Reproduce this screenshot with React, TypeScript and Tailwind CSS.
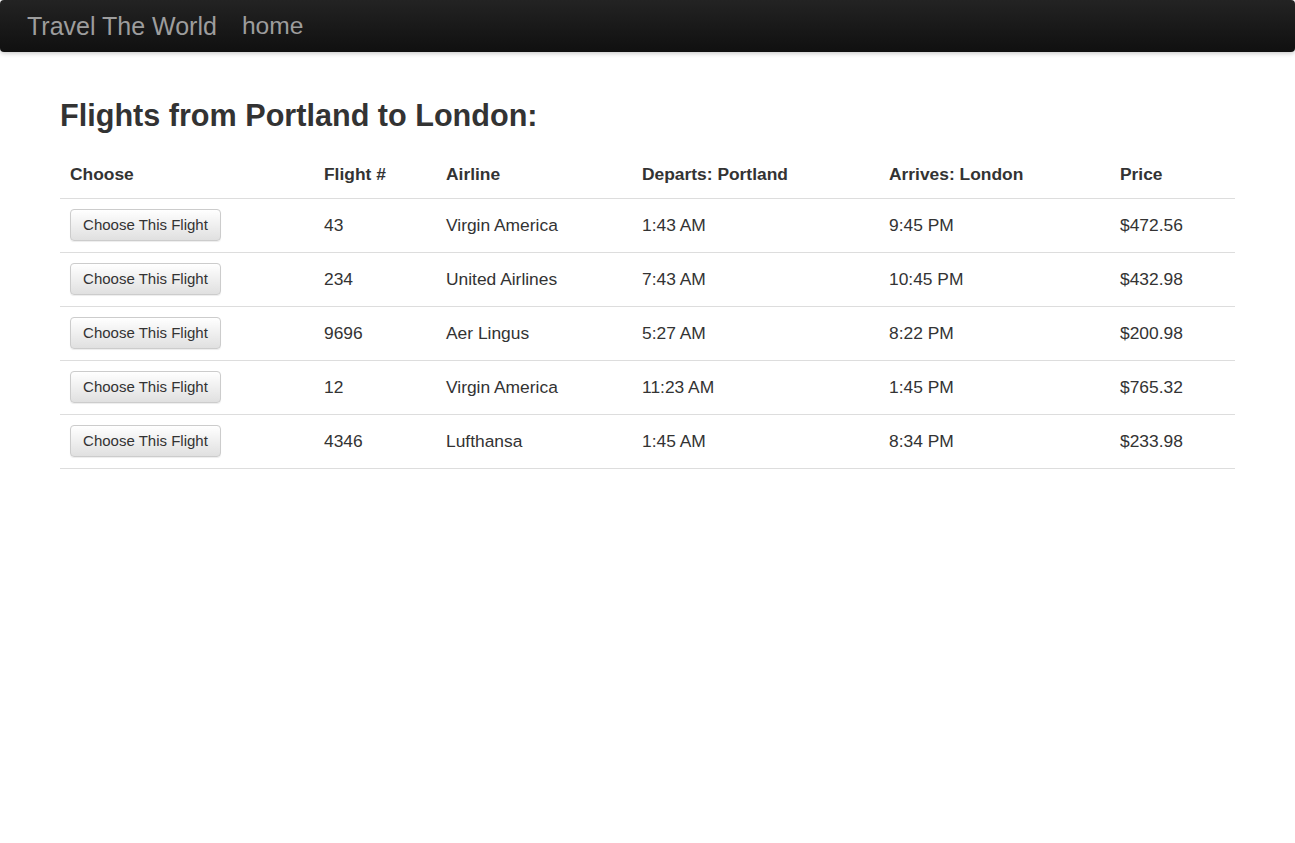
import React from "react";

const flights = [
  { num: "43", airline: "Virgin America", dep: "1:43 AM", arr: "9:45 PM", price: "$472.56" },
  { num: "234", airline: "United Airlines", dep: "7:43 AM", arr: "10:45 PM", price: "$432.98" },
  { num: "9696", airline: "Aer Lingus", dep: "5:27 AM", arr: "8:22 PM", price: "$200.98" },
  { num: "12", airline: "Virgin America", dep: "11:23 AM", arr: "1:45 PM", price: "$765.32" },
  { num: "4346", airline: "Lufthansa", dep: "1:45 AM", arr: "8:34 PM", price: "$233.98" },
];

export default function App() {
  return (
    <div
      className="min-h-[843px] bg-white text-[#333]"
      style={{ fontFamily: '"Liberation Sans", Arial, sans-serif' }}
    >
      <nav className="h-[52px] w-full rounded-[4px] bg-gradient-to-b from-[#232323] to-[#101010] shadow-[0_1px_5px_rgba(0,0,0,0.25)] flex items-center pl-[27px]">
        <span className="text-[25px] leading-[52px] text-[#9d9d9d]">Travel The World</span>
        <span className="ml-[25px] text-[24.6px] leading-[52px] text-[#9d9d9d]">home</span>
      </nav>
      <div className="px-[60px]">
        <h2 className="mt-[47px] mb-[22px] text-[30.6px] leading-[33px] font-bold text-[#333]">
          Flights from Portland to London:
        </h2>
        <table className="w-full table-fixed border-collapse text-[17.4px]">
          <colgroup>
            <col className="w-[254px]" />
            <col className="w-[122px]" />
            <col className="w-[196px]" />
            <col className="w-[247px]" />
            <col className="w-[231px]" />
            <col className="w-[125px]" />
          </colgroup>
          <thead>
            <tr className="border-b border-[#ddd]">
              {["Choose", "Flight #", "Airline", "Departs: Portland", "Arrives: London", "Price"].map((h) => (
                <th key={h} className="px-[10px] pt-[7px] pb-[12px] h-[44px] text-left font-bold leading-[24px] align-bottom">
                  {h}
                </th>
              ))}
            </tr>
          </thead>
          <tbody>
            {flights.map((f) => (
              <tr key={f.num} className="h-[54px] border-b border-[#ddd]">
                <td className="px-[10px] align-middle">
                  <button className="h-[32px] w-[151px] rounded-[4px] border border-[#ccc] bg-gradient-to-b from-white to-[#e0e0e0] text-[15px] leading-[20px] text-[#333] shadow-[inset_0_1px_0_rgba(255,255,255,0.15),0_1px_1px_rgba(0,0,0,0.075)]">
                    Choose This Flight
                  </button>
                </td>
                <td className="px-[10px] align-middle leading-[24px]">{f.num}</td>
                <td className="px-[10px] align-middle leading-[24px]">{f.airline}</td>
                <td className="px-[10px] align-middle leading-[24px]">{f.dep}</td>
                <td className="px-[10px] align-middle leading-[24px]">{f.arr}</td>
                <td className="px-[10px] align-middle leading-[24px]">{f.price}</td>
              </tr>
            ))}
          </tbody>
        </table>
      </div>
    </div>
  );
}
